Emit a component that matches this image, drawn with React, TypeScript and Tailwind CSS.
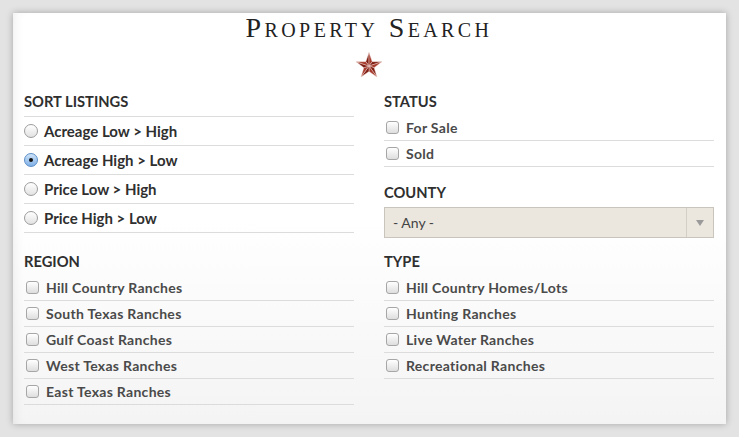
import React from 'react'

const sortOptions = ['Acreage Low > High', 'Acreage High > Low', 'Price Low > High', 'Price High > Low']
const regions = ['Hill Country Ranches', 'South Texas Ranches', 'Gulf Coast Ranches', 'West Texas Ranches', 'East Texas Ranches']
const types = ['Hill Country Homes/Lots', 'Hunting Ranches', 'Live Water Ranches', 'Recreational Ranches']

function Star() {
  const c = [13, 14]
  const pt = (deg: number, r: number) => {
    const a = (deg * Math.PI) / 180
    return [c[0] + r * Math.sin(a), c[1] - r * Math.cos(a)]
  }
  const halves: { d: string; dark: boolean }[] = []
  for (let k = 0; k < 5; k++) {
    const o = pt(k * 72, 13.5)
    const l = pt(k * 72 - 36, 5.4)
    const r = pt(k * 72 + 36, 5.4)
    halves.push({ d: `M${c[0]} ${c[1]} L${o[0]} ${o[1]} L${l[0]} ${l[1]}Z`, dark: true })
    halves.push({ d: `M${c[0]} ${c[1]} L${o[0]} ${o[1]} L${r[0]} ${r[1]}Z`, dark: false })
  }
  return (
    <svg width="26" height="26" viewBox="0 0 26 26">
      {halves.map((h, i) => (
        <path key={i} d={h.d} fill={h.dark ? '#7e1d12' : '#a63a2c'} stroke="#f0d6d2" strokeWidth="0.45" strokeLinejoin="round" />
      ))}
    </svg>
  )
}

function Radio({ checked }: { checked?: boolean }) {
  return checked ? (
    <span className="flex h-[14px] w-[14px] shrink-0 items-center justify-center rounded-full border border-[#5a8fc8] bg-gradient-to-b from-[#cfe3f8] to-[#7fb0e6]">
      <span className="h-[4px] w-[4px] rounded-full bg-[#111]" />
    </span>
  ) : (
    <span className="h-[14px] w-[14px] shrink-0 rounded-full border border-[#9c9c9c] bg-gradient-to-b from-white to-[#e2e2e2]" />
  )
}

function Check() {
  return <span className="h-[13px] w-[13px] shrink-0 rounded-[3px] border border-[#a6a6a6] bg-gradient-to-b from-white to-[#dedede]" />
}

function Heading({ children, className = '' }: { children: React.ReactNode; className?: string }) {
  return <h2 className={`text-[14.7px] font-bold uppercase leading-[20px] text-[#2f2f2f] ${className}`}>{children}</h2>
}

function CheckList({ items }: { items: string[] }) {
  return (
    <ul>
      {items.map(t => (
        <li key={t} className="flex h-[26px] items-center gap-[7px] border-b border-[#dcdcdc] pl-[2px]">
          <Check />
          <span className="text-[14px] font-bold tracking-[0.3px] text-[#4a4a4a]">{t}</span>
        </li>
      ))}
    </ul>
  )
}

export default function App() {
  return (
    <div className="h-screen w-screen bg-[#e3e3e3] p-[13px] font-['Lato',sans-serif]">
      <div className="h-full w-full bg-white bg-gradient-to-b from-white via-white to-[#f4f4f4] px-[11px] pr-[12px] shadow-[0_0_7px_rgba(0,0,0,0.28),inset_8px_0_14px_-10px_rgba(0,0,0,0.12)]">
        <h1 className="text-center font-['Liberation_Serif',serif] text-[28px] leading-[30px] tracking-[3.4px] text-[#222] [font-variant-caps:small-caps]">
          Property Search
        </h1>
        <div className="mt-[9px] flex justify-center">
          <Star />
        </div>

        <div className="mt-[13px] grid grid-cols-2 gap-x-[30px]">
          <div>
            <Heading className="mb-[5px]">Sort Listings</Heading>
            <ul className="border-t border-[#dcdcdc]">
              {sortOptions.map((t, i) => (
                <li key={t} className="flex h-[29px] items-center gap-[6px] border-b border-[#dcdcdc]">
                  <Radio checked={i === 1} />
                  <span className="text-[15px] font-bold text-[#2f2f2f]">{t}</span>
                </li>
              ))}
            </ul>
          </div>
          <div>
            <Heading className="mb-[4px]">Status</Heading>
            <CheckList items={['For Sale', 'Sold']} />
            <Heading className="mb-[5px] mt-[15px]">County</Heading>
            <div className="flex h-[31px] items-stretch border border-[#c9c5bd] bg-[#ebe6de]">
              <span className="flex flex-1 items-center pl-[8px] text-[14px] text-[#444]">- Any -</span>
              <span className="flex w-[27px] items-center justify-center border-l border-[#d3cfc7]">
                <svg width="8" height="6" viewBox="0 0 8 6">
                  <path d="M0 0 H8 L4 6Z" fill="#9a9a9a" />
                </svg>
              </span>
            </div>
          </div>

          <div className="mt-[13px]">
            <Heading className="mb-[4px]">Region</Heading>
            <CheckList items={regions} />
          </div>
          <div className="mt-[13px]">
            <Heading className="mb-[4px]">Type</Heading>
            <CheckList items={types} />
          </div>
        </div>
      </div>
    </div>
  )
}
